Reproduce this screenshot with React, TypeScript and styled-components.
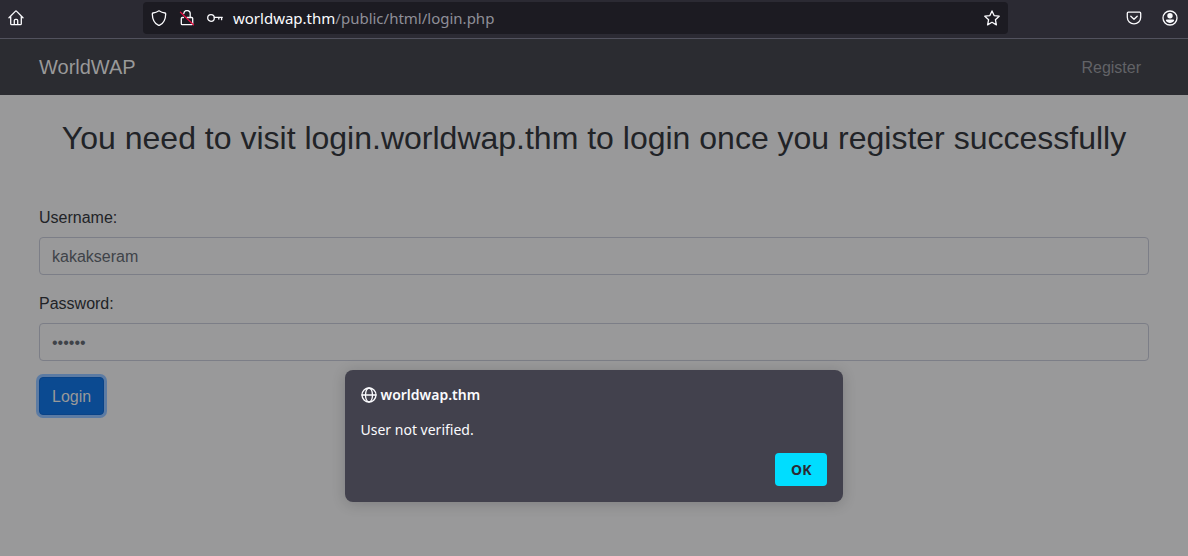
import React from "react";
import styled, { createGlobalStyle } from "styled-components";

const GlobalStyle = createGlobalStyle`
  *, *::before, *::after { box-sizing: border-box; }
  body {
    margin: 0;
    background: #99999a;
    color: #212327;
    font: 16px/24px "Liberation Sans", Arial, sans-serif;
  }
`;

const uiFont = `"Noto Sans", "Open Sans", sans-serif`;

const Browser = styled.div`
  position: relative;
  min-height: 100vh;
`;

const Toolbar = styled.header`
  display: grid;
  grid-template-columns: 135fr 865fr 170fr;
  align-items: center;
  height: 39px;
  padding: 0 10px 2px 8px;
  background: #2b2a33;
  border-bottom: 1px solid #52525e;
`;

const ToolGroup = styled.div<{ $end?: boolean }>`
  display: flex;
  gap: 20px;
  justify-content: ${(p) => (p.$end ? "flex-end" : "flex-start")};
`;

const IconButton = styled.button`
  display: flex;
  flex: none;
  padding: 0;
  border: 0;
  background: none;
  color: #fbfbfe;
`;

const AddressBar = styled.div`
  display: flex;
  align-items: center;
  gap: 12px;
  height: 32px;
  padding: 0 8px;
  border-radius: 4px;
  background: #1c1b22;
`;

const Url = styled.div`
  flex: 1;
  margin-left: -2px;
  color: #8f8f98;
  font: 15px/20px ${uiFont};
  white-space: nowrap;
`;

const Host = styled.span`
  color: #fbfbfe;
`;

const Navbar = styled.nav`
  padding: 8px 0;
  background: #2b2c31;
`;

const Container = styled.div`
  max-width: 1140px;
  margin: 0 auto;
  padding: 0 15px;
`;

const NavRow = styled(Container)`
  display: flex;
  align-items: center;
  justify-content: space-between;
  height: 40px;
`;

const Brand = styled.a`
  color: #999999;
  font-size: 20px;
  line-height: 30px;
  text-decoration: none;
`;

const NavLink = styled.a`
  padding: 9px 8px 7px;
  color: #626367;
  text-decoration: none;
`;

const Title = styled.h2`
  margin: 24px 0 48px;
  font-size: 32px;
  line-height: 38px;
  font-weight: 400;
  text-align: center;
`;

const Field = styled.div`
  margin-bottom: 16px;
`;

const Label = styled.label`
  display: block;
  padding-top: 1px;
  margin-bottom: 7px;
`;

const Input = styled.input`
  display: block;
  width: 100%;
  height: 38px;
  padding: 7px 12px 5px;
  border: 1px solid #7c7e87;
  border-radius: 4px;
  outline: 0;
  background: #99999a;
  color: #3f4349;
  font: inherit;
`;

const LoginButton = styled.button`
  height: 38px;
  padding: 7px 12px 5px;
  border: 1px solid #0a4387;
  border-radius: 4px;
  background: #0b4a91;
  box-shadow: 0 0 0 3px #5c7ba3;
  color: #999999;
  font: inherit;
`;

const Dialog = styled.section`
  position: absolute;
  top: 370px;
  left: 0;
  right: 0;
  width: 42%;
  margin: 0 auto;
  padding: 16px;
  border-radius: 8px;
  background: #42414d;
  box-shadow: 0 2px 14px rgba(20, 20, 26, 0.2);
  color: #fbfbfe;
  font: 14px/18px ${uiFont};
`;

const DialogTitle = styled.h1`
  display: flex;
  align-items: center;
  gap: 4px;
  margin: 0 0 17px;
  font-size: 14px;
  line-height: 18px;
  font-weight: 600;
`;

const Message = styled.p`
  margin: 0 0 14px;
`;

const Actions = styled.div`
  display: flex;
  justify-content: flex-end;
`;

const OkButton = styled.button`
  height: 33px;
  padding: 0 16px;
  border: 0;
  border-radius: 4px;
  background: #00ddff;
  color: #2b2a33;
  font: 700 14px/18px ${uiFont};
`;

const Icon = ({ children }: { children: React.ReactNode }) => (
  <svg width="16" height="16" viewBox="0 0 16 16" fill="none" stroke="currentColor" strokeWidth="1.3" strokeLinecap="round" strokeLinejoin="round" aria-hidden="true">
    {children}
  </svg>
);

const HomeIcon = () => (
  <Icon>
    <path d="M1 7.8 7.3 1.4a1 1 0 0 1 1.4 0L15 7.8M2.7 6.5v7.2c0 .6.4 1 1 1h8.6c.6 0 1-.4 1-1V6.5M6.3 14.5v-4a1.2 1.2 0 0 1 1.2-1.2h1a1.2 1.2 0 0 1 1.2 1.2v4" />
  </Icon>
);

const ShieldIcon = () => (
  <Icon>
    <path d="M8 .8c-1.800 1.200-4.200 2-6 2.200-.4.100-.7.400-.7.900.1 5.200 2 9.200 6 11.300.4.200 1 .200 1.400 0 4-2.100 5.900-6.100 6-11.300 0-.5-.3-.8-.7-.9C12.200 2.800 9.800 2 8 .8z" />
  </Icon>
);

const InsecureIcon = () => (
  <Icon>
    <path d="M4.500 7.500H3.300a1 1 0 0 0-1 1v5.200c0 .6.400 1 1 1h9.400c.6 0 1-.4 1-1V8.500a1 1 0 0 0-1-1H8M4.800 3.500A3.200 3.200 0 0 1 11.200 4v3.500" />
    <path d="m1.500 2.300 13 12.500" stroke="#e20f42" />
  </Icon>
);

const KeyIcon = () => (
  <Icon>
    <circle cx="4" cy="8" r="3.300" />
    <path d="M7.300 7.300H15.300M14.600 7.300v2.400M11.800 7.300v1.700" />
  </Icon>
);

const StarIcon = () => (
  <Icon>
    <path d="m8 .9 2.100 4.700 5.100.6-3.800 3.500 1 5.200L8 12.300l-4.400 2.600 1-5.200L.8 6.200l5.100-.6z" />
  </Icon>
);

const PocketIcon = () => (
  <Icon>
    <path d="M2.300 2.200h11.400c.6 0 1 .4 1 1v4a6.700 6.700 0 0 1-13.400 0v-4c0-.6.400-1 1-1zM4.800 6.200 8 9.300l3.200-3.100" />
  </Icon>
);

const AccountIcon = () => (
  <Icon>
    <circle cx="8" cy="8" r="7" />
    <circle cx="8" cy="5.700" r="2.700" fill="currentColor" stroke="none" />
    <path d="M4.800 9.500h6.400c.7 0 1.100.6.800 1.200a4.700 4.700 0 0 1-8 0c-.3-.6.100-1.200.8-1.200z" fill="currentColor" stroke="none" />
  </Icon>
);

const GlobeIcon = () => (
  <Icon>
    <circle cx="8" cy="8" r="7" />
    <ellipse cx="8" cy="8" rx="3.500" ry="7" />
    <path d="M1 8h14" />
  </Icon>
);

export default function App() {
  return (
    <Browser>
      <GlobalStyle />
      <Toolbar>
        <ToolGroup>
          <IconButton aria-label="Home"><HomeIcon /></IconButton>
        </ToolGroup>
        <AddressBar>
          <IconButton aria-label="Tracking protection"><ShieldIcon /></IconButton>
          <IconButton aria-label="Connection not secure"><InsecureIcon /></IconButton>
          <IconButton aria-label="Saved password"><KeyIcon /></IconButton>
          <Url><Host>worldwap.thm</Host>/public/html/login.php</Url>
          <IconButton aria-label="Bookmark this page"><StarIcon /></IconButton>
        </AddressBar>
        <ToolGroup $end>
          <IconButton aria-label="Save to Pocket"><PocketIcon /></IconButton>
          <IconButton aria-label="Account"><AccountIcon /></IconButton>
        </ToolGroup>
      </Toolbar>
      <Navbar>
        <NavRow>
          <Brand href="#">WorldWAP</Brand>
          <NavLink href="#">Register</NavLink>
        </NavRow>
      </Navbar>
      <Container as="main">
        <Title>You need to visit login.worldwap.thm to login once you register successfully</Title>
        <form onSubmit={(e) => e.preventDefault()}>
          <Field>
            <Label htmlFor="username">Username:</Label>
            <Input id="username" type="text" defaultValue="kakakseram" />
          </Field>
          <Field>
            <Label htmlFor="password">Password:</Label>
            <Input id="password" type="password" defaultValue="secret" />
          </Field>
          <LoginButton type="submit">Login</LoginButton>
        </form>
      </Container>
      <Dialog role="alertdialog" aria-labelledby="dialog-title" aria-describedby="dialog-message">
        <DialogTitle id="dialog-title"><GlobeIcon />worldwap.thm</DialogTitle>
        <Message id="dialog-message">User not verified.</Message>
        <Actions>
          <OkButton type="button">OK</OkButton>
        </Actions>
      </Dialog>
    </Browser>
  );
}
